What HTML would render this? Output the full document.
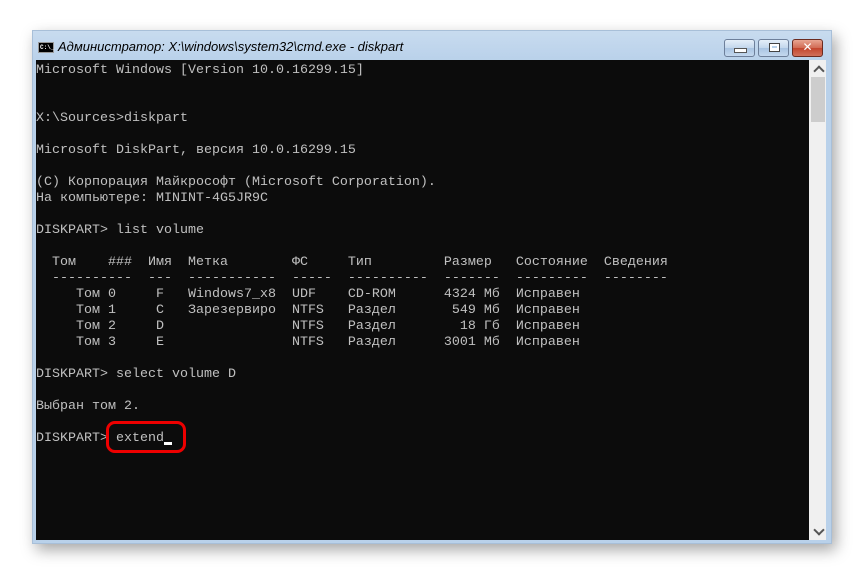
<!DOCTYPE html>
<html><head><meta charset="utf-8"><style>
html,body{margin:0;padding:0;background:#fff;width:864px;height:576px;overflow:hidden;position:relative}
.win{position:absolute;left:32px;top:30px;width:800px;height:514px;background:linear-gradient(#c8dbef,#b9d1ea 30px);box-shadow:4px 6px 14px rgba(0,0,0,.35);border:1px solid #a8bfd8;box-sizing:border-box}
.title{position:absolute;left:58px;top:39px;font:italic 13px "Liberation Sans","DejaVu Sans",sans-serif;color:#000}
.ico{position:absolute;left:38px;top:42px;width:16px;height:11px;background:#000;border:1px solid #999;box-sizing:border-box;color:#fff;font:bold 6px "Liberation Mono",monospace;line-height:9px;text-indent:1px}
.btn{position:absolute;top:39px;height:18px;border:1px solid #6d7f9a;border-radius:3px;box-sizing:border-box;background:linear-gradient(#e4eef9,#c3d6ec 50%,#a9c4e2 51%,#c4d8ee)}
.cls{background:linear-gradient(#e8a592,#d06a53 50%,#c3452d 51%,#d0705a);border-color:#6b2b20}
.con{position:absolute;left:36px;top:60px;width:773px;height:480px;background:#0c0c0c}
pre{margin:0;position:absolute;left:36px;top:63px;font:13.33px/16px "Liberation Mono","DejaVu Sans Mono",monospace;color:#c0c0c0}
.sb{position:absolute;left:809px;top:60px;width:17px;height:480px;background:#f0f0f0}
.th{position:absolute;left:811px;top:77px;width:14px;height:45px;background:#cdcdcd}
.red{position:absolute;left:106px;top:421px;width:80px;height:32px;border:3px solid #e00;border-radius:9px;box-sizing:border-box}
.cur{position:absolute;left:164px;top:442px;width:8px;height:3px;background:#fff}
.ar{position:absolute;left:813px;width:6px;height:6px;border-left:2px solid #555;border-top:2px solid #555}
</style></head><body>
<div class="win"></div>
<div class="ico">C:\_</div>
<div class="title">Администратор: X:\windows\system32\cmd.exe - diskpart</div>
<div class="btn" style="left:724px;width:31px"><div style="position:absolute;left:9px;top:8px;width:11px;height:3px;background:#fff;border:1px solid #555"></div></div>
<div class="btn" style="left:758px;width:31px"><div style="position:absolute;left:10px;top:3px;width:9px;height:7px;border:1px solid #444;background:#fff"><div style="margin:2px;width:5px;height:2px;background:#b9d1ea"></div></div></div>
<div class="btn cls" style="left:792px;width:31px;color:#fff;font:bold 12px 'DejaVu Sans',sans-serif;text-align:center;line-height:15px">✕</div>
<div class="con"></div>
<div class="sb"></div>
<div class="ar" style="top:67px;transform:rotate(45deg);left:815px"></div>
<div class="ar" style="top:526px;transform:rotate(225deg);left:815px"></div>
<div class="th"></div>
<pre>Microsoft Windows [Version 10.0.16299.15]


X:\Sources&gt;diskpart

Microsoft DiskPart, версия 10.0.16299.15

(C) Корпорация Майкрософт (Microsoft Corporation).
На компьютере: MININT-4G5JR9C

DISKPART&gt; list volume

  Том    ###  Имя  Метка        ФС     Тип         Размер   Состояние  Сведения
  ----------  ---  -----------  -----  ----------  -------  ---------  --------
     Том 0     F   Windows7_x8  UDF    CD-ROM      4324 Мб  Исправен
     Том 1     C   Зарезервиро  NTFS   Раздел       549 Мб  Исправен
     Том 2     D                NTFS   Раздел        18 Гб  Исправен
     Том 3     E                NTFS   Раздел      3001 Мб  Исправен

DISKPART&gt; select volume D

Выбран том 2.

DISKPART&gt; extend</pre>
<div class="cur"></div>
<div class="red"></div>
</body></html>
